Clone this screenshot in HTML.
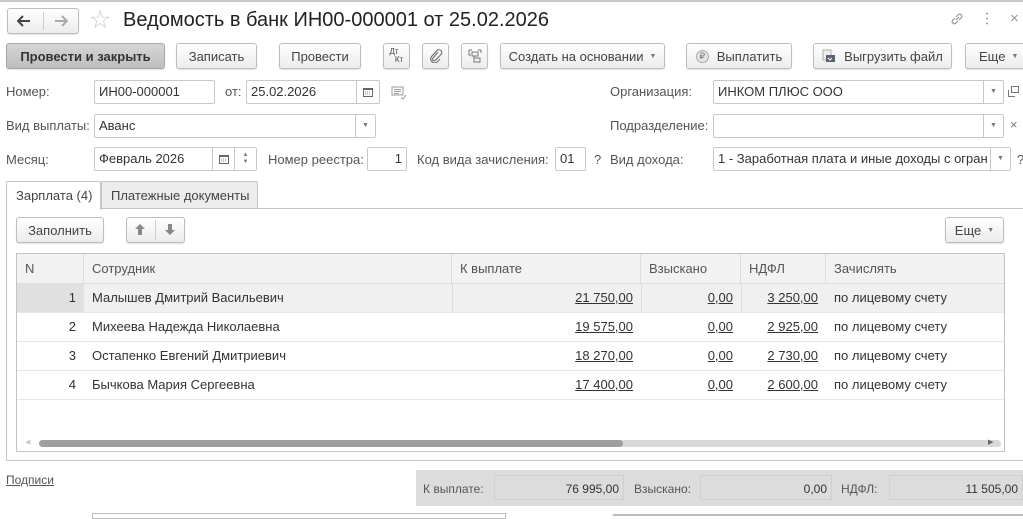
<!DOCTYPE html>
<html><head><meta charset="utf-8"><style>
*{box-sizing:border-box;margin:0;padding:0}
body{width:1023px;height:516px;overflow:hidden;background:#fff;font-family:"Liberation Sans",Arial,sans-serif;font-size:13px;color:#4a4a4a;position:relative}
.a{position:absolute}
.btn{position:absolute;height:26px;border:1px solid #bdbdbd;border-radius:3px;background:linear-gradient(#fff,#ececec);box-shadow:0 1px 1px rgba(0,0,0,.12);display:flex;align-items:center;justify-content:center;color:#444;white-space:nowrap}
.inp{position:absolute;height:24px;border:1px solid #c9c9c9;border-radius:2px;background:#fff;color:#333;padding-left:4px;line-height:22px;white-space:nowrap;overflow:hidden}
.dd{position:absolute;top:0;bottom:0;width:20px;border-left:1px solid #c9c9c9;display:flex;align-items:center;justify-content:center;font-size:7px;color:#777}
.lbl{position:absolute;color:#555;line-height:16px}
.th{position:absolute;top:0;height:29px;line-height:29px;padding-left:8px;border-right:1px solid #ddd;color:#555}
.row{position:absolute;left:0;right:0;height:29px;border-bottom:1px solid #e6e6e6;line-height:28px}
.c{position:absolute;top:0;height:28px;color:#333}
.u{text-decoration:underline;text-align:right;padding-right:8px}
</style></head><body>
<div class="a" style="left:0;top:0;width:1023px;height:2px;background:#c8c8c8"></div>
<!-- nav -->
<div class="btn" style="left:7px;top:8px;width:72px;height:26px"></div>
<div class="a" style="left:43px;top:12px;width:1px;height:18px;background:#ccc"></div>
<svg class="a" style="left:17px;top:15px" width="14" height="12"><path d="M1 6h12M6 1L1 6l5 5" stroke="#444" stroke-width="2" fill="none"/></svg>
<svg class="a" style="left:54px;top:15px" width="14" height="12"><path d="M1 6h12M8 1l5 5-5 5" stroke="#aaa" stroke-width="2" fill="none"/></svg>
<div class="a" style="left:89px;top:5px;font-size:25px;color:#c8c8c8">&#9734;</div>
<div class="a" style="left:123px;top:9px;font-size:20px;color:#222">Ведомость в банк ИН00-000001 от 25.02.2026</div>
<svg class="a" style="left:949px;top:11px" width="16" height="16" viewBox="0 0 16 16"><path d="M7 9l3-3M6 7L3.5 9.5a2.2 2.2 0 003 3L9 10M10 9l2.5-2.5a2.2 2.2 0 00-3-3L7 6" stroke="#999" fill="none" stroke-width="1.2"/></svg>
<div class="a" style="left:986px;top:11px;width:2px;height:14px;background:radial-gradient(circle,#999 1px,transparent 1px) 0 0/2px 5px"></div>
<div class="a" style="left:1010px;top:10px;color:#999;font-size:15px">&#215;</div>
<!-- toolbar -->
<div class="btn" style="left:6px;top:43px;width:159px;background:linear-gradient(#d6d6d6,#bdbdbd);border-color:#a8a8a8;font-weight:bold;color:#333">Провести и закрыть</div>
<div class="btn" style="left:176px;top:43px;width:81px">Записать</div>
<div class="btn" style="left:279px;top:43px;width:82px">Провести</div>
<div class="btn" style="left:383px;top:43px;width:27px;font-size:8px;line-height:8px;flex-direction:column"><span style="margin-left:-5px">Дт</span><span style="margin-left:5px">Кт</span></div>
<div class="btn" style="left:422px;top:43px;width:27px"><svg width="14" height="14" viewBox="0 0 14 14"><path d="M9 3L4 9a1.6 1.6 0 002.3 2.3L12 5.5a2.8 2.8 0 00-4-4L2.5 7.5a4 4 0 005.6 5.6L11 10" stroke="#777" fill="none" stroke-width="1.2"/></svg></div>
<div class="btn" style="left:461px;top:43px;width:27px"><svg width="14" height="14" viewBox="0 0 14 14"><path d="M1 1h3M1 1v5h2M4 3h6v4H4zM6 7v6h6V9H6M13 1h-3M13 1v3" stroke="#777" fill="none"/></svg></div>
<div class="btn" style="left:500px;top:43px;width:165px">Создать на основании <span style="font-size:7px;margin-left:6px;color:#777">&#9660;</span></div>
<div class="btn" style="left:686px;top:43px;width:106px"><span style="display:inline-block;width:13px;height:13px;border-radius:50%;border:1px solid #aaa;background:#e4e4e4;font-size:9px;line-height:11px;text-align:center;margin-right:8px;color:#777">₽</span>Выплатить</div>
<div class="btn" style="left:813px;top:43px;width:139px"><svg width="14" height="14" style="margin-right:8px"><rect x="1" y="1" width="8" height="10" fill="#eee" stroke="#aaa"/><rect x="4" y="6" width="9" height="7" fill="#5a6070"/><path d="M6 9l2 2 2-2" stroke="#fff" fill="none"/></svg>Выгрузить файл</div>
<div class="btn" style="left:965px;top:43px;width:66px;justify-content:flex-start;padding-left:13px">Еще <span style="font-size:7px;margin-left:6px;color:#777">&#9660;</span></div>
<!-- row1 -->
<div class="lbl" style="left:6px;top:84px">Номер:</div>
<div class="inp" style="left:94px;top:80px;width:121px">ИН00-000001</div>
<div class="lbl" style="left:225px;top:84px">от:</div>
<div class="inp" style="left:246px;top:80px;width:134px">25.02.2026<div class="dd" style="right:0;width:23px"><svg width="10" height="10"><rect x=".5" y="1.5" width="9" height="8" fill="none" stroke="#666"/><rect x="0" y="1" width="10" height="2" fill="#666"/><path d="M2 5h6M2 7h6" stroke="#888" stroke-dasharray="1 1"/></svg></div></div>
<svg class="a" style="left:391px;top:86px" width="16" height="14"><path d="M1 1h11v8H1zM3 3.5h7M3 5.5h7M3 7.5h5" stroke="#999" fill="none"/><path d="M10 12l2 1 3-4" stroke="#999" fill="none"/></svg>
<div class="lbl" style="left:610px;top:84px">Организация:</div>
<div class="inp" style="left:713px;top:80px;width:291px">ИНКОМ ПЛЮС ООО<div class="dd" style="right:0">&#9660;</div></div>
<svg class="a" style="left:1008px;top:86px" width="11" height="11"><rect x="3.5" y=".5" width="7" height="6" fill="none" stroke="#777"/><path d="M.5 4v6.5H7" stroke="#777" fill="none"/></svg>
<!-- row2 -->
<div class="lbl" style="left:6px;top:118px">Вид выплаты:</div>
<div class="inp" style="left:94px;top:114px;width:282px">Аванс<div class="dd" style="right:0">&#9660;</div></div>
<div class="lbl" style="left:610px;top:118px">Подразделение:</div>
<div class="inp" style="left:713px;top:114px;width:291px"><div class="dd" style="right:0">&#9660;</div></div>
<div class="a" style="left:1010px;top:117px;color:#777">&#215;</div>
<!-- row3 -->
<div class="lbl" style="left:6px;top:152px">Месяц:</div>
<div class="inp" style="left:94px;top:147px;width:163px">Февраль 2026<div class="dd" style="right:22px;width:22px"><svg width="10" height="10"><rect x=".5" y="1.5" width="9" height="8" fill="none" stroke="#666"/><rect x="0" y="1" width="10" height="2" fill="#666"/><path d="M2 5h6M2 7h6" stroke="#888" stroke-dasharray="1 1"/></svg></div><div class="dd" style="right:0;width:22px;font-size:6px;flex-direction:column;line-height:7px">▲<br>▼</div></div>
<div class="lbl" style="left:268px;top:152px">Номер реестра:</div>
<div class="inp" style="left:367px;top:147px;width:40px;text-align:right;padding-right:4px">1</div>
<div class="lbl" style="left:417px;top:152px">Код вида зачисления:</div>
<div class="inp" style="left:555px;top:147px;width:31px">01</div>
<div class="lbl" style="left:594px;top:152px">?</div>
<div class="lbl" style="left:610px;top:152px">Вид дохода:</div>
<div class="inp" style="left:713px;top:147px;width:298px">1 - Заработная плата и иные доходы с огран<div class="dd" style="right:0">&#9660;</div></div>
<div class="lbl" style="left:1017px;top:152px">?</div>
<!-- tabs -->
<div class="a" style="left:6px;top:208px;width:1017px;height:253px;border:1px solid #c4c4c4;border-right:none"></div>
<div class="a" style="left:101px;top:181px;width:157px;height:28px;border:1px solid #c4c4c4;background:#ececec;border-radius:2px 2px 0 0;padding:6px 0 0 9px;color:#444">Платежные документы</div>
<div class="a" style="left:6px;top:181px;width:95px;height:29px;border:1px solid #c4c4c4;border-bottom:none;background:#fff;border-radius:2px 2px 0 0;padding:6px 0 0 9px;color:#444">Зарплата (4)</div>
<div class="btn" style="left:16px;top:217px;width:88px">Заполнить</div>
<div class="btn" style="left:126px;top:217px;width:59px"></div>
<svg class="a" style="left:134px;top:223px" width="12" height="13"><path d="M6 1L1 6h3v6h4V6h3z" fill="#888"/></svg>
<svg class="a" style="left:164px;top:223px" width="12" height="13"><path d="M6 12L1 7h3V1h4v6h3z" fill="#888"/></svg>
<div class="a" style="left:155px;top:220px;width:1px;height:20px;background:#ccc"></div>
<div class="btn" style="left:945px;top:217px;width:59px">Еще <span style="font-size:7px;margin-left:6px;color:#777">&#9660;</span></div>
<!-- table -->
<div class="a" style="left:16px;top:253px;width:989px;height:199px;border:1px solid #c4c4c4;overflow:hidden">
 <div class="a" style="left:0;top:0;width:989px;height:30px;background:#f2f2f2;border-bottom:1px solid #ddd">
  <div class="th" style="left:0;width:67px">N</div>
  <div class="th" style="left:67px;width:368px">Сотрудник</div>
  <div class="th" style="left:435px;width:189px">К выплате</div>
  <div class="th" style="left:624px;width:100px">Взыскано</div>
  <div class="th" style="left:724px;width:85px">НДФЛ</div>
  <div class="th" style="left:809px;width:180px;border:none">Зачислять</div>
 </div>
 <div class="row" style="top:30px;background:#f0f0f0"><div class="c" style="left:0;width:67px;background:#e0e0e0;text-align:right;padding-right:8px">1</div><div class="c" style="left:67px;padding-left:8px">Малышев Дмитрий Васильевич</div><div class="c u" style="left:435px;width:189px;border-left:1px solid #ddd">21 750,00</div><div class="c u" style="left:624px;width:100px;border-left:1px solid #ddd">0,00</div><div class="c u" style="left:724px;width:85px;border-left:1px solid #ddd">3 250,00</div><div class="c" style="left:817px">по лицевому счету</div></div>
 <div class="row" style="top:59px"><div class="c" style="left:0;width:67px;text-align:right;padding-right:8px">2</div><div class="c" style="left:67px;padding-left:8px">Михеева Надежда Николаевна</div><div class="c u" style="left:435px;width:189px">19 575,00</div><div class="c u" style="left:624px;width:100px">0,00</div><div class="c u" style="left:724px;width:85px">2 925,00</div><div class="c" style="left:817px">по лицевому счету</div></div>
 <div class="row" style="top:88px"><div class="c" style="left:0;width:67px;text-align:right;padding-right:8px">3</div><div class="c" style="left:67px;padding-left:8px">Остапенко Евгений Дмитриевич</div><div class="c u" style="left:435px;width:189px">18 270,00</div><div class="c u" style="left:624px;width:100px">0,00</div><div class="c u" style="left:724px;width:85px">2 730,00</div><div class="c" style="left:817px">по лицевому счету</div></div>
 <div class="row" style="top:117px"><div class="c" style="left:0;width:67px;text-align:right;padding-right:8px">4</div><div class="c" style="left:67px;padding-left:8px">Бычкова Мария Сергеевна</div><div class="c u" style="left:435px;width:189px">17 400,00</div><div class="c u" style="left:624px;width:100px">0,00</div><div class="c u" style="left:724px;width:85px">2 600,00</div><div class="c" style="left:817px">по лицевому счету</div></div>
 <div class="a" style="left:22px;top:186px;width:962px;height:7px;border-radius:4px;background:#d8d8d8"></div>
 <div class="a" style="left:22px;top:186px;width:584px;height:7px;border-radius:4px;background:#9e9e9e"></div>
 <div class="a" style="left:8px;top:184px;font-size:7px;color:#ccc">&#9664;</div>
 <div class="a" style="left:971px;top:184px;font-size:7px;color:#666">&#9654;</div>
</div>
<!-- footer -->
<div class="a" style="left:6px;top:473px;color:#555;text-decoration:underline;font-size:12px">Подписи</div>
<div class="a" style="left:416px;top:470px;width:607px;height:36px;background:#dcdcdc;font-size:12px;color:#555">
 <div class="a" style="left:7px;top:12px">К выплате:</div>
 <div class="a" style="left:78px;top:5px;width:130px;height:25px;border:1px solid #d0d0d0;text-align:right;padding:6px 4px 0 0;color:#333">76 995,00</div>
 <div class="a" style="left:218px;top:12px">Взыскано:</div>
 <div class="a" style="left:284px;top:5px;width:132px;height:25px;border:1px solid #d0d0d0;text-align:right;padding:6px 4px 0 0;color:#333">0,00</div>
 <div class="a" style="left:425px;top:12px">НДФЛ:</div>
 <div class="a" style="left:473px;top:5px;width:134px;height:25px;border:1px solid #d0d0d0;text-align:right;padding:6px 4px 0 0;color:#333">11 505,00</div>
</div>
<div class="a" style="left:92px;top:513px;width:414px;height:6px;border:1px solid #bbb"></div>
<div class="a" style="left:613px;top:514px;width:410px;height:2px;background:#bbb"></div>
</body></html>
